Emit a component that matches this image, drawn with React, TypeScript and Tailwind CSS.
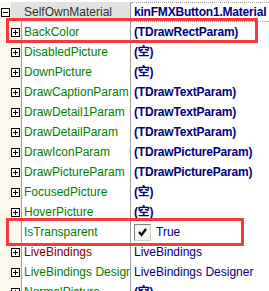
type Row = {
  name: string;
  value: string;
  nameColor?: 'green' | 'maroon';
  bold?: boolean;
  expandable?: boolean;
  checkbox?: boolean;
};

const rows: Row[] = [
  { name: 'BackColor', value: '(TDrawRectParam)', bold: true, expandable: true },
  { name: 'DisabledPicture', value: '(空)', bold: true, expandable: true },
  { name: 'DownPicture', value: '(空)', bold: true, expandable: true },
  { name: 'DrawCaptionParam', value: '(TDrawTextParam)', bold: true, expandable: true },
  { name: 'DrawDetail1Param', value: '(TDrawTextParam)', bold: true, expandable: true },
  { name: 'DrawDetailParam', value: '(TDrawTextParam)', bold: true, expandable: true },
  { name: 'DrawIconParam', value: '(TDrawPictureParam)', bold: true, expandable: true },
  { name: 'DrawPictureParam', value: '(TDrawPictureParam)', bold: true, expandable: true },
  { name: 'FocusedPicture', value: '(空)', bold: true, expandable: true },
  { name: 'HoverPicture', value: '(空)', bold: true, expandable: true },
  { name: 'IsTransparent', value: 'True', checkbox: true },
  { name: 'LiveBindings', value: 'LiveBindings', nameColor: 'maroon', expandable: true },
  { name: 'LiveBindings Designer', value: 'LiveBindings Designer', expandable: true },
  { name: 'NormalPicture', value: '(空)', bold: true, expandable: true },
];

function ExpandBox({ open }: { open?: boolean }) {
  return (
    <svg width="9" height="9" viewBox="0 0 9 9" shapeRendering="crispEdges">
      <rect x="0.5" y="0.5" width="8" height="8" fill="white" stroke="black" />
      <line x1="2" y1="4.5" x2="7" y2="4.5" stroke="black" />
      {!open && <line x1="4.5" y1="2" x2="4.5" y2="7" stroke="black" />}
    </svg>
  );
}

function CheckBox() {
  return (
    <div className="w-[17px] h-[17px] border border-t-[#808080] border-l-[#808080] border-r-[#d4d0c8] border-b-[#d4d0c8] bg-[#f4f4f4] flex items-center justify-center">
      <svg width="11" height="11" viewBox="0 0 11 11">
        <path d="M2 5 L4.5 8 L9 2" fill="none" stroke="black" strokeWidth="2.2" />
      </svg>
    </div>
  );
}

export default function App() {
  return (
    <div className="relative w-[269px] h-[291px] overflow-hidden bg-white pt-[2px] font-['Liberation_Sans','Noto_Sans_CJK_SC',sans-serif] text-[12px] leading-none">
      {/* Category header */}
      <div className="flex h-[20px]">
        <div className="w-[11px] bg-[#fcf8ee] flex items-center justify-start pl-[1px]">
          <ExpandBox open />
        </div>
        <div className="w-[120px] bg-[#e2e2e2] border-r border-[#a0a0a0] flex items-center pl-[13px] text-[#303030]">
          SelfOwnMaterial
        </div>
        <div className="flex-1 border-y border-dotted border-[#a0a0a0] flex items-center pl-[3px] font-bold tracking-[-0.2px] text-[#000080] whitespace-nowrap overflow-hidden">
          kinFMXButton1.Material
        </div>
      </div>

      {rows.map((row) => (
        <div key={row.name} className="flex h-[20px]">
          <div className="w-[22px] bg-[#fcf8ee] border-r border-[#a0a0a0] flex items-center pl-[11px]">
            {row.expandable && <ExpandBox />}
          </div>
          <div
            className={`w-[109px] border-r border-[#a0a0a0] flex items-center pl-[2px] whitespace-nowrap overflow-hidden ${
              row.nameColor === 'maroon' ? 'text-[#800000]' : 'text-[#008000]'
            }`}
          >
            {row.name}
          </div>
          <div
            className={`flex-1 flex items-center pl-[3px] whitespace-nowrap overflow-hidden text-[#000080] ${
              row.bold ? 'font-bold tracking-[-0.2px]' : ''
            }`}
          >
            {row.checkbox ? (
              <div className="flex items-center gap-[5px]">
                <CheckBox />
                <span>{row.value}</span>
              </div>
            ) : (
              row.value
            )}
          </div>
        </div>
      ))}

      {/* highlight boxes */}
      <div className="absolute left-[6px] top-[18px] w-[252px] h-[25px] border-[3px] border-[#f23a3f]" />
      <div className="absolute left-[6px] top-[218px] w-[238px] h-[28px] border-[3px] border-[#f23a3f]" />
    </div>
  );
}
